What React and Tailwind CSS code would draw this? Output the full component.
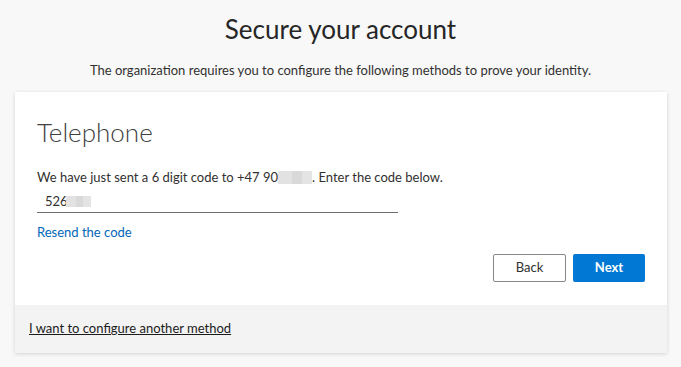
import { useState } from 'react'

const Redacted = ({ className }) => (
  <span className={`inline-flex align-middle ${className}`}>
    <span className="h-full w-[40%] bg-[#e2e2e2]" />
    <span className="h-full w-[30%] bg-[#d9d9d9]" />
    <span className="h-full w-[30%] bg-[#e4e4e4]" />
  </span>
)

const App = () => {
  const [code, setCode] = useState('526')

  return (
    <div className="w-[681px] h-[367px] bg-[#f8f8f8] overflow-hidden font-['Lato',sans-serif] text-[#1b1b1b]">
      <div className="h-[92px] flex flex-col items-center">
        <h1 className="mt-[11px] text-[26px] leading-[36px] font-normal text-[#262626]">
          Secure your account
        </h1>
        <p className="mt-[14px] text-[13px] leading-[18px] text-[#323130]">
          The organization requires you to configure the following methods to prove your identity.
        </p>
      </div>

      <div className="ml-[15px] w-[652px] bg-white shadow-[0_1px_4px_rgba(0,0,0,0.15)]">
        <div className="h-[213px] pl-[22px] pr-[22px] pt-[24px] flex flex-col">
          <h2 className="text-[26px] leading-[32px] font-light text-[#404040]">Telephone</h2>
          <p className="mt-[20px] text-[13px] leading-[18px] text-[#323130] flex items-center">
            We have just sent a 6 digit code to +47 90
            <Redacted className="w-[34px] h-[13px]" />
            . Enter the code below.
          </p>
          <div className="mt-[5px] w-[361px] h-[22px] border-b border-[#6e6e6e] flex items-center pl-[8px] text-[13px] text-[#323130]">
            <span>{code.slice(0, 2)}</span>
            <span>6</span>
            <Redacted className="-ml-[2px] w-[25px] h-[11px]" />
            <input
              className="sr-only"
              value={code}
              onChange={(e) => setCode(e.target.value)}
            />
          </div>
          <a href="#" className="mt-[10px] self-start text-[13px] leading-[18px] text-[#0067b8]">
            Resend the code
          </a>
          <div className="mt-[13px] flex justify-end gap-[7px]">
            <button className="w-[73px] h-[28px] border border-[#8a8886] rounded-[2px] bg-white text-[13px] text-[#323130]">
              Back
            </button>
            <button className="w-[72px] h-[28px] rounded-[2px] bg-[#0078d4] text-[13px] font-bold text-white">
              Next
            </button>
          </div>
        </div>
        <div className="h-[48px] bg-[#f3f3f3] flex items-center pl-[14px]">
          <a href="#" className="text-[13px] underline text-[#1b1b1b]">
            I want to configure another method
          </a>
        </div>
      </div>
    </div>
  )
}

export default App
